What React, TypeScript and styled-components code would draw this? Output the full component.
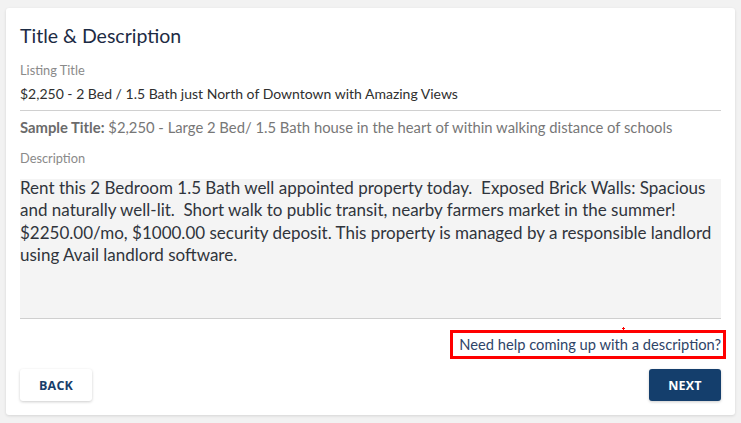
import React from "react";
import styled, { createGlobalStyle } from "styled-components";

const GlobalStyle = createGlobalStyle`
  html, body { margin: 0; padding: 0; background: #f2f2f2; }
  body { font-family: "Lato", "Noto Sans", sans-serif; }
  * { box-sizing: border-box; }
`;

const Page = styled.div`
  padding: 8px 6px 8px 6px;
  width: 741px;
`;

const Card = styled.section`
  background: #fff;
  border-radius: 3px;
  box-shadow: 0 1px 3px rgba(0, 0, 0, 0.12);
  padding: 20px 14px 14px 14px;
  height: 407px;
  display: flex;
  flex-direction: column;
`;

const Heading = styled.h2`
  margin: 0 0 18px 0;
  font-size: 19.5px;
  line-height: 16px;
  font-weight: 400;
  color: #1c2b44;
`;

const FieldLabel = styled.div`
  font-size: 12.8px;
  line-height: 16px;
  color: #8a8a8a;
`;

const TitleValue = styled.div`
  margin-top: 8px;
  font-size: 14px;
  line-height: 16px;
  color: #2f2f2f;
  padding-bottom: 8px;
  border-bottom: 1px solid #d0d0d0;
`;

const SampleRow = styled.div`
  margin-top: 6px;
  font-size: 14.8px;
  line-height: 20px;
  color: #777;
`;

const SampleStrong = styled.b`
  color: #6b6b6b;
  font-weight: 700;
`;

const DescLabel = styled(FieldLabel)`
  margin-top: 13px;
`;

const DescBox = styled.div`
  margin-top: 13px;
  height: 140px;
  background: #f4f4f4;
  border-bottom: 1px solid #cfcfcf;
  padding-top: 1px;
`;

const DescText = styled.p`
  margin: -3px 0 0 0;
  font-size: 17px;
  line-height: 22.4px;
  color: #30343c;
  white-space: pre-wrap;
`;

const HelpRow = styled.div`
  display: flex;
  justify-content: flex-end;
  margin-top: 11px;
`;

const HelpBox = styled.div`
  position: relative;
  border: 3px solid #ff0000;
  padding: 1px 2px 1px 6px;
  margin-right: -5px;
`;

const HelpLink = styled.a`
  font-size: 14.7px;
  line-height: 21px;
  color: #2e4468;
  text-decoration: none;
  display: block;
`;

const Marker = styled.span`
  position: absolute;
  left: 169px;
  top: -6px;
  width: 3px;
  height: 3px;
  &::before, &::after {
    content: "";
    position: absolute;
    background: #ff0000;
  }
  &::before { left: 1px; top: 0; width: 1px; height: 3px; }
  &::after { left: 0; top: 1px; width: 3px; height: 1px; }
`;

const ButtonRow = styled.div`
  display: flex;
  justify-content: space-between;
  margin-top: auto;
`;

const Button = styled.button<{ $primary?: boolean }>`
  width: 72px;
  height: 32px;
  border: none;
  border-radius: 3px;
  font-family: "Open Sans", "Noto Sans", sans-serif;
  font-weight: 700;
  font-size: 12.5px;
  letter-spacing: 0.2px;
  cursor: pointer;
  background: ${(p) => (p.$primary ? "#143e6c" : "#ffffff")};
  color: ${(p) => (p.$primary ? "#ffffff" : "#183e6b")};
  box-shadow: 0 1px 3px rgba(0, 0, 0, 0.2);
`;

export default function App() {
  return (
    <>
      <GlobalStyle />
      <Page>
        <Card>
          <Heading>Title &amp; Description</Heading>
          <FieldLabel>Listing Title</FieldLabel>
          <TitleValue>$2,250 - 2 Bed / 1.5 Bath just North of Downtown with Amazing Views</TitleValue>
          <SampleRow>
            <SampleStrong>Sample Title:</SampleStrong> $2,250 - Large 2 Bed/ 1.5 Bath house in the heart of within walking distance of schools
          </SampleRow>
          <DescLabel>Description</DescLabel>
          <DescBox>
            <DescText>
              {"Rent this 2 Bedroom 1.5 Bath well appointed property today.  Exposed Brick Walls: Spacious and naturally well-lit.  Short walk to public transit, nearby farmers market in the summer! $2250.00/mo, $1000.00 security deposit. This property is managed by a responsible landlord using Avail landlord software."}
            </DescText>
          </DescBox>
          <HelpRow>
            <HelpBox>
              <Marker />
              <HelpLink href="#">Need help coming up with a description?</HelpLink>
            </HelpBox>
          </HelpRow>
          <ButtonRow>
            <Button>BACK</Button>
            <Button $primary>NEXT</Button>
          </ButtonRow>
        </Card>
      </Page>
    </>
  );
}
